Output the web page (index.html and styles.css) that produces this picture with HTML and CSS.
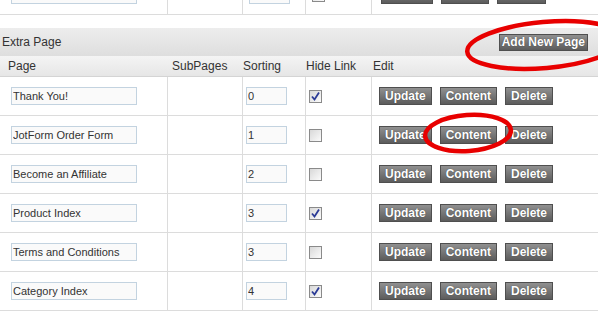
FILE: index.html
```html
<!DOCTYPE html>
<html lang="en">
<head>
  <meta charset="UTF-8" />
  <title>Extra Page</title>
  <link rel="stylesheet" href="styles.css">
</head>
<body>

  <!-- previous table, scrolled mostly out of view -->
  <div class="row row-prev">
    <div class="cell-page"><input class="txt" type="text" value=""></div>
    <div class="cell-sub"></div>
    <div class="cell-sort"><input class="txt num" type="text" value=""></div>
    <div class="cell-hide"><span class="check"></span></div>
    <div class="cell-edit">
      <button class="btn btn-blank w52"></button>
      <button class="btn btn-blank w48"></button>
      <button class="btn btn-blank w49"></button>
    </div>
  </div>

  <div class="section-head">
    <span>Extra Page</span>
    <button class="btn btn-add">Add New Page</button>
  </div>

  <div class="col-head">
    <div class="h-page">Page</div>
    <div class="h-sub">SubPages</div>
    <div class="h-sort">Sorting</div>
    <div class="h-hide">Hide Link</div>
    <div class="h-edit">Edit</div>
  </div>

  <div class="row">
    <div class="cell-page"><input class="txt" type="text" value="Thank You!"></div>
    <div class="cell-sub"></div>
    <div class="cell-sort"><input class="txt num" type="text" value="0"></div>
    <div class="cell-hide"><span class="check"><svg width="11" height="11" viewBox="0 0 11 11"><path d="M2 5.5 L4.5 8.5 L9 1.5" fill="none" stroke="#2a3a96" stroke-width="1.8"/></svg></span></div>
    <div class="cell-edit">
      <button class="btn">Update</button>
      <button class="btn">Content</button>
      <button class="btn">Delete</button>
    </div>
  </div>

  <div class="row">
    <div class="cell-page"><input class="txt" type="text" value="JotForm Order Form"></div>
    <div class="cell-sub"></div>
    <div class="cell-sort"><input class="txt num" type="text" value="1"></div>
    <div class="cell-hide"><span class="check"></span></div>
    <div class="cell-edit">
      <button class="btn">Update</button>
      <button class="btn">Content</button>
      <button class="btn">Delete</button>
    </div>
  </div>

  <div class="row">
    <div class="cell-page"><input class="txt" type="text" value="Become an Affiliate"></div>
    <div class="cell-sub"></div>
    <div class="cell-sort"><input class="txt num" type="text" value="2"></div>
    <div class="cell-hide"><span class="check"></span></div>
    <div class="cell-edit">
      <button class="btn">Update</button>
      <button class="btn">Content</button>
      <button class="btn">Delete</button>
    </div>
  </div>

  <div class="row">
    <div class="cell-page"><input class="txt" type="text" value="Product Index"></div>
    <div class="cell-sub"></div>
    <div class="cell-sort"><input class="txt num" type="text" value="3"></div>
    <div class="cell-hide"><span class="check"><svg width="11" height="11" viewBox="0 0 11 11"><path d="M2 5.5 L4.5 8.5 L9 1.5" fill="none" stroke="#2a3a96" stroke-width="1.8"/></svg></span></div>
    <div class="cell-edit">
      <button class="btn">Update</button>
      <button class="btn">Content</button>
      <button class="btn">Delete</button>
    </div>
  </div>

  <div class="row">
    <div class="cell-page"><input class="txt" type="text" value="Terms and Conditions"></div>
    <div class="cell-sub"></div>
    <div class="cell-sort"><input class="txt num" type="text" value="3"></div>
    <div class="cell-hide"><span class="check"></span></div>
    <div class="cell-edit">
      <button class="btn">Update</button>
      <button class="btn">Content</button>
      <button class="btn">Delete</button>
    </div>
  </div>

  <div class="row">
    <div class="cell-page"><input class="txt" type="text" value="Category Index"></div>
    <div class="cell-sub"></div>
    <div class="cell-sort"><input class="txt num" type="text" value="4"></div>
    <div class="cell-hide"><span class="check"><svg width="11" height="11" viewBox="0 0 11 11"><path d="M2 5.5 L4.5 8.5 L9 1.5" fill="none" stroke="#2a3a96" stroke-width="1.8"/></svg></span></div>
    <div class="cell-edit">
      <button class="btn">Update</button>
      <button class="btn">Content</button>
      <button class="btn">Delete</button>
    </div>
  </div>

  <!-- red marker circles drawn over the screenshot -->
  <svg class="marks" width="598" height="328" viewBox="0 0 598 328">
    <ellipse cx="545" cy="45" rx="78" ry="23" transform="rotate(-5 545 45)" fill="none" stroke="#e80000" stroke-width="4.5"/>
    <ellipse cx="468" cy="133" rx="43" ry="18" transform="rotate(-4 468 133)" fill="none" stroke="#e80000" stroke-width="4.5"/>
  </svg>

</body>
</html>
```

FILE: styles.css
```css
body {
  margin: 0;
  width: 598px;
  height: 328px;
  overflow: hidden;
  position: relative;
  font-family: "Liberation Sans", Arial, sans-serif;
  font-size: 12px;
  color: #333;
  background: #fff;
}

.row {
  display: grid;
  grid-template-columns: 167px 75px 63px 66px 1fr;
  height: 38px;
  border-bottom: 1px solid #dcdcdc;
}

.row > div {
  display: flex;
  align-items: center;
}

.row > div + div {
  border-left: 1px solid #dcdcdc;
}

.cell-page { padding-left: 11px; }
.cell-sort { padding-left: 3px; }
.cell-hide { padding-left: 3px; }
.cell-edit { padding-left: 7px; gap: 8px; }

.row-prev {
  margin-top: -24px;
}

.row-prev .cell-sort { padding-left: 6px; }
.row-prev .cell-hide { padding-left: 6px; }
.row-prev .cell-edit { padding-left: 9px; }

.txt {
  box-sizing: border-box;
  width: 126px;
  height: 18px;
  margin: 0;
  padding: 0 1px;
  border: 1px solid #c3d3e0;
  background: #fafafa;
  font-family: "Liberation Sans", Arial, sans-serif;
  font-size: 11px;
  color: #333;
  outline: none;
}

.num {
  width: 41px;
}

.check {
  box-sizing: border-box;
  width: 13px;
  height: 13px;
  border: 1px solid #8a8a8a;
  background: linear-gradient(135deg, #d8d8d8, #fbfbfb);
  display: flex;
  align-items: center;
  justify-content: center;
}

.btn {
  box-sizing: border-box;
  height: 18px;
  margin: 0;
  padding: 0 5px;
  border: 1px solid #4f4f4f;
  background: linear-gradient(#909090, #5c5c5c);
  color: #fff;
  font-family: "Liberation Sans", Arial, sans-serif;
  font-size: 12px;
  font-weight: bold;
  text-shadow: 0 0 1px #3a3a3a;
  line-height: 16px;
  cursor: pointer;
}

/* buttons of the row above, whose labels are out of view */
.btn-blank { padding: 0; }
.w52 { width: 52px; }
.w48 { width: 48px; }
.w49 { width: 49px; }

.btn-add {
  height: 17px;
  padding: 0 2px;
  line-height: 15px;
}

/* Section header */
.section-head {
  margin-top: 13px;
  height: 28px;
  padding: 0 10px 0 2px;
  display: flex;
  align-items: center;
  justify-content: space-between;
  background: linear-gradient(#ededed, #dedede);
  color: #333;
}

.col-head {
  display: grid;
  grid-template-columns: 167px 75px 63px 66px 1fr;
  height: 20px;
  align-items: center;
  background: linear-gradient(#f4f4f4, #e6e6e6);
  border-bottom: 1px solid #d4d4d4;
  color: #333;
}

.h-page { padding-left: 8px; }
.h-sub { padding-left: 5px; }
.h-sort { padding-left: 1px; }
.h-hide { padding-left: 1px; }
.h-edit { padding-left: 2px; }

.marks {
  position: absolute;
  top: 0;
  left: 0;
  pointer-events: none;
}
```
